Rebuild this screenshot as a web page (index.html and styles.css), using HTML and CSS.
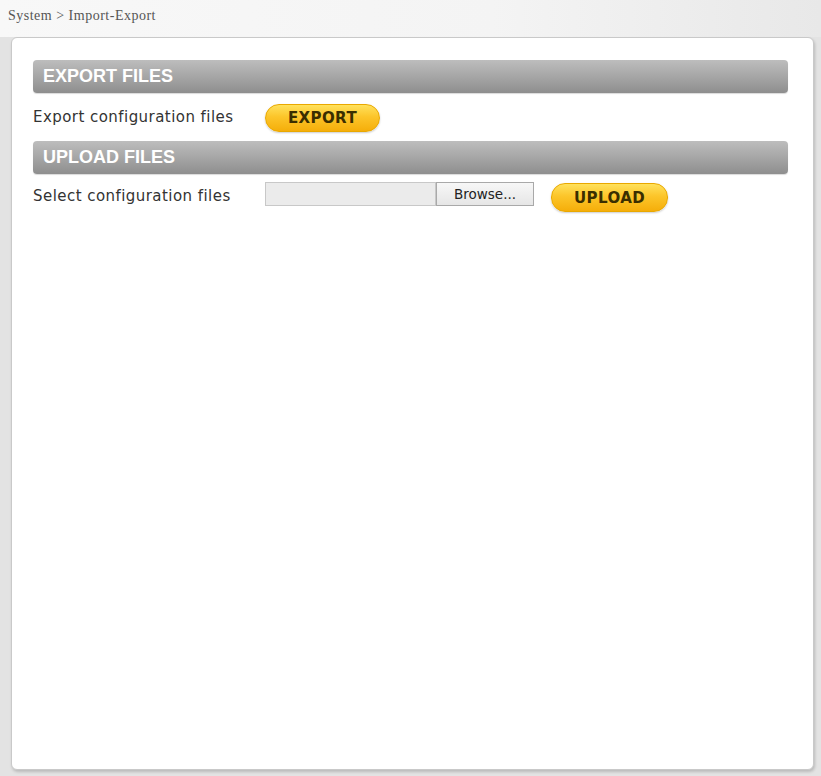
FILE: index.html
```html
<!DOCTYPE html>
<html>
<head>
<meta charset="utf-8">
<link rel="stylesheet" href="styles.css">
</head>
<body>
<div class="top">
  <div class="crumb">System &gt; Import-Export</div>
</div>
<div class="panel">
  <div class="section-head">EXPORT FILES</div>
  <div class="row row-export">
    <div class="label">Export configuration files</div>
    <button class="pill">EXPORT</button>
  </div>
  <div class="section-head">UPLOAD FILES</div>
  <div class="row row-upload">
    <div class="label">Select configuration files</div>
    <div class="file-field"></div>
    <button class="browse">Browse...</button>
    <button class="pill pill-upload">UPLOAD</button>
  </div>
</div>
</body>
</html>
```
FILE: styles.css
```css
html, body {
  margin: 0;
  padding: 0;
}
body {
  width: 821px;
  height: 776px;
  background: #e3e3e3;
  overflow: hidden;
  font-family: "DejaVu Sans", Verdana, sans-serif;
}
.top {
  height: 37px;
  background: linear-gradient(to right, #f8f8f8 0%, #f4f4f4 60%, #e8e8e8 100%);
}
.crumb {
  padding: 8px 0 0 8px;
  font-family: "Liberation Serif", "Times New Roman", serif;
  font-size: 14px;
  color: #555;
  letter-spacing: 0.5px;
}
.panel {
  margin-left: 11px;
  width: 803px;
  height: 733px;
  background: #fff;
  border: 1px solid #c9c9c9;
  border-radius: 6px;
  box-shadow: 1px 2px 3px rgba(0,0,0,0.18);
  padding: 22px 25px 0 21px;
  box-sizing: border-box;
}
.section-head {
  height: 33px;
  border-radius: 4px;
  background: linear-gradient(to bottom, #bdbdbd 0%, #a6a6a6 50%, #8e8e8e 100%);
  box-shadow: 0 1px 1px rgba(0,0,0,0.15);
  color: #fff;
  font-family: "Liberation Sans", Arial, sans-serif;
  font-weight: bold;
  font-size: 18px;
  line-height: 33px;
  padding-left: 10px;
}
.row {
  display: flex;
  align-items: center;
}
.row-export {
  height: 48px;
}
.row-upload {
  padding-top: 8px;
  align-items: flex-start;
}
.label {
  width: 232px;
  font-size: 15px;
  letter-spacing: 0.45px;
  color: #333;
}
.row-upload .label {
  line-height: 24px;
  padding-top: 2px;
}
.pill {
  height: 28px;
  width: 115px;
  border-radius: 14px;
  border: 1px solid #e9a800;
  background: linear-gradient(to bottom, #ffe15c 0%, #fcc52a 45%, #f5ae0a 100%);
  box-shadow: 0 1px 2px rgba(0,0,0,0.2);
  font-family: "DejaVu Sans", Verdana, sans-serif;
  font-weight: bold;
  font-size: 15px;
  letter-spacing: 0.4px;
  color: #3a2e00;
  padding: 0;
  margin-top: 1px;
}
.pill-upload {
  width: 117px;
  height: 29px;
  margin-left: 17px;
  margin-top: 1px;
}
.file-field {
  width: 171px;
  height: 24px;
  box-sizing: border-box;
  border: 1px solid #c8c8c8;
  background: #ebebeb;
}
.browse {
  width: 98px;
  height: 24px;
  box-sizing: border-box;
  border: 1px solid #a9a9a9;
  background: linear-gradient(to bottom, #f7f7f7, #e6e6e6);
  font-family: "DejaVu Sans", Verdana, sans-serif;
  font-size: 13.5px;
  color: #222;
  padding: 0;
  margin: 0;
}
```
